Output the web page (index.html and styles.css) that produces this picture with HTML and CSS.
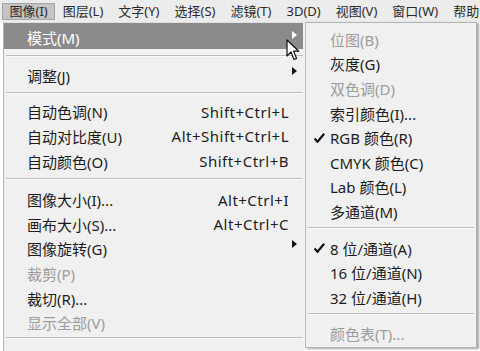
FILE: index.html
```html
<!DOCTYPE html>
<html lang="zh-CN">
<head>
<meta charset="UTF-8" />
<meta name="viewport" content="width=device-width,initial-scale=1" />
<title>图像菜单</title>
<link rel="stylesheet" href="styles.css">
</head>
<body>
<div class="screen">
  <div class="menubar">
    <span class="top open">图像(I)</span>
    <span class="top">图层(L)</span>
    <span class="top">文字(Y)</span>
    <span class="top">选择(S)</span>
    <span class="top">滤镜(T)</span>
    <span class="top">3D(D)</span>
    <span class="top">视图(V)</span>
    <span class="top">窗口(W)</span>
    <span class="top">帮助</span>
  </div>

  <div class="menus">
    <!-- 图像 menu -->
    <div class="menu main">
      <div class="item active"><span class="label">模式(M)</span><span class="key"></span><span class="arrow"></span></div>
      <div class="sep s1"></div>
      <div class="item"><span class="label">调整(J)</span><span class="key"></span><span class="arrow"></span></div>
      <div class="sep s2"></div>
      <div class="item"><span class="label">自动色调(N)</span><span class="key">Shift+Ctrl+L</span><span></span></div>
      <div class="item"><span class="label">自动对比度(U)</span><span class="key">Alt+Shift+Ctrl+L</span><span></span></div>
      <div class="item"><span class="label">自动颜色(O)</span><span class="key">Shift+Ctrl+B</span><span></span></div>
      <div class="sep s3"></div>
      <div class="item"><span class="label">图像大小(I)...</span><span class="key">Alt+Ctrl+I</span><span></span></div>
      <div class="item"><span class="label">画布大小(S)...</span><span class="key">Alt+Ctrl+C</span><span></span></div>
      <div class="item"><span class="label">图像旋转(G)</span><span class="key"></span><span class="arrow"></span></div>
      <div class="item off"><span class="label">裁剪(P)</span><span class="key"></span><span></span></div>
      <div class="item"><span class="label">裁切(R)...</span><span class="key"></span><span></span></div>
      <div class="item off"><span class="label">显示全部(V)</span><span class="key"></span><span></span></div>
      <div class="sep s4"></div>
    </div>

    <!-- 模式 submenu -->
    <div class="menu sub">
      <div class="item off"><span class="check"></span>位图(B)</div>
      <div class="item"><span class="check"></span>灰度(G)</div>
      <div class="item off"><span class="check"></span>双色调(D)</div>
      <div class="item"><span class="check"></span>索引颜色(I)...</div>
      <div class="item"><span class="check"><svg width="11" height="10" viewBox="0 0 11 10"><path d="M0.5 5.5 L3.5 8.8 L10.2 0.8" fill="none" stroke="#111" stroke-width="2.2"/></svg></span>RGB 颜色(R)</div>
      <div class="item"><span class="check"></span>CMYK 颜色(C)</div>
      <div class="item"><span class="check"></span>Lab 颜色(L)</div>
      <div class="item"><span class="check"></span>多通道(M)</div>
      <div class="sep"></div>
      <div class="item"><span class="check"><svg width="11" height="10" viewBox="0 0 11 10"><path d="M0.5 5.5 L3.5 8.8 L10.2 0.8" fill="none" stroke="#111" stroke-width="2.2"/></svg></span>8 位/通道(A)</div>
      <div class="item"><span class="check"></span>16 位/通道(N)</div>
      <div class="item"><span class="check"></span>32 位/通道(H)</div>
      <div class="sep"></div>
      <div class="item off"><span class="check"></span>颜色表(T)...</div>
    </div>
  </div>

  <svg class="cursor" width="14" height="22" viewBox="0 0 14 22">
    <path d="M1 1 L1 17 L5 13 L8 20.5 L10.6 19.4 L7.6 12.2 L12.8 12.2 Z" fill="#fff" stroke="#111" stroke-width="1.2" stroke-linejoin="round"/>
  </svg>
</div>
</body>
</html>
```

FILE: styles.css
```css
* {
  box-sizing: border-box;
}
body {
  margin: 0;
  background: #fff;
  font-family: "Noto Sans", "Noto Sans CJK SC", sans-serif;
  color: #1c1c1c;
}
.screen {
  position: relative;
  width: 480px;
  height: 351px;
  overflow: hidden;
}
.menubar {
  display: flex;
  height: 22px;
  padding: 3px 0 0 2px;
  background: #ececec;
  font-size: 13px;
  color: #2a2a2a;
}
.top {
  height: 17px;
  line-height: 15px;
  padding: 0 6.5px;
  border: 1px solid transparent;
  white-space: nowrap;
}
.top.open {
  background: #c4c4c4;
  border-color: #a4a4a4;
}
.menus {
  display: flex;
  align-items: flex-start;
}
.menu {
  background: #f0f0f0;
  border: 1px solid #b4b4b4;
  font-size: 15px;
}
.main {
  width: 302px;
  height: 340px;
  margin-left: 3px;
  padding: 0 1px 0 0;
  border-right-color: #f7f7f7;
  border-top-color: #e0e0e0;
}
.main .item {
  display: grid;
  grid-template-columns: 1fr auto 6px;
  column-gap: 3px;
  align-items: center;
  height: 24.6px;
  padding: 0 5px 0 23px;
  white-space: nowrap;
}
.main .item.active {
  height: 26px;
  padding-top: 3px;
  background: #8b8b8b;
  color: #fff;
}
.key {
  text-align: right;
  letter-spacing: 0.5px;
}
.arrow {
  width: 0;
  height: 0;
  border-left: 5px solid #111;
  border-top: 4px solid transparent;
  border-bottom: 4px solid transparent;
  margin-top: -9px;
}
.active .arrow {
  border-left-color: #fff;
  margin-top: -6px;
}
.item.off {
  color: #9c9c9c;
}
.sep {
  height: 0;
  border-top: 1px solid #bdbdbd;
  border-bottom: 1px solid #fbfbfb;
  margin: 5px 2px 6px 2px;
}
.main .s1 {
  margin: 6px 0 6px 2px;
}
.main .s2 {
  margin: 4px 0 6px 2px;
}
.main .s3 {
  margin: 5px 0 7px 2px;
}
.main .s4 {
  margin: 2px 0 0 2px;
}
.sub {
  width: 172px;
  height: 326px;
  padding-top: 4px;
  box-shadow: 2px 1px 2px rgba(0, 0, 0, 0.35);
}
.sub .item {
  display: flex;
  align-items: center;
  height: 24.6px;
  white-space: nowrap;
}
.sub .sep {
  margin: 3px 2px 7px 2px;
}
.check {
  display: flex;
  align-items: center;
  justify-content: center;
  width: 24px;
  padding-left: 2px;
}
.cursor {
  position: absolute;
  left: 286px;
  top: 39px;
}
```
